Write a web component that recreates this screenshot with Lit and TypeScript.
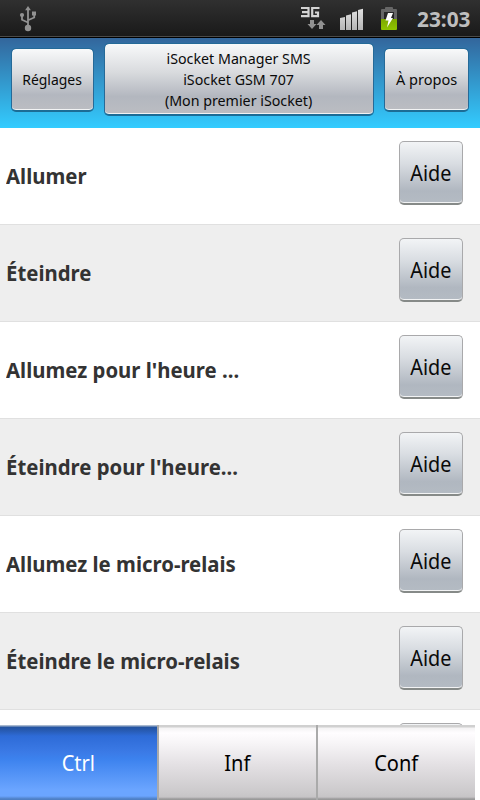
import { LitElement, html, css } from "lit";
import { customElement, property } from "lit/decorators.js";

@customElement("status-bar")
class StatusBar extends LitElement {
  static styles = css`
    :host {
      display: block;
      flex: none;
      height: 38px;
      box-sizing: border-box;
      background: linear-gradient(#303030, #191919);
      border-bottom: 1px solid #000;
      box-shadow: inset 0 -1px #4a4a48;
    }
    .icons { display: block; }
    .clock {
      font: bold 21px "Noto Sans", "Open Sans", sans-serif;
      fill: #bebebe;
    }
  `;
  render() {
    return html`
      <svg class="icons" width="480" height="37" viewBox="0 0 480 37">
        <defs>
          <linearGradient id="bars" x1="0" y1="0" x2="0" y2="1">
            <stop offset="0" stop-color="#e2e2e2" />
            <stop offset="1" stop-color="#b4b4b4" />
          </linearGradient>
          <linearGradient id="charge" x1="0" y1="0" x2="0" y2="1">
            <stop offset="0" stop-color="#7da800" />
            <stop offset="1" stop-color="#8fc400" />
          </linearGradient>
        </defs>
        <g fill="none" stroke="#929292" stroke-width="1.8">
          <path d="M28 27V9M28 22.5L22 19.7V15M28 20.3L34.2 17.5V14" />
        </g>
        <g fill="#929292">
          <circle cx="28" cy="28" r="3.2" />
          <circle cx="22" cy="15" r="2.1" />
          <path d="M28 6l2.900 4.200h-5.800zM32 11.500h4v4h-4z" />
        </g>
        <g fill="none" stroke="#d4d4d4" stroke-width="2.2">
          <path d="M301 8H308.500V16.200H301M302 12.200H308.500" />
          <path d="M319.500 8H312.200V16.200H318V12.500H315" />
        </g>
        <g fill="#919191">
          <path d="M310 20h4v4h2.500l-4.500 5-4.500-5h2.500z" />
          <path d="M319 29v-4h-2.500l4.500-5 4.500 5h-2.500v4z" />
        </g>
        <g fill="url(#bars)">
          <path d="M340 18l5-1v13h-5zM346 15.500l5-1.300V30h-5zM352 12.500l5-1.300V30h-5zM358 10l5-1.300V30h-5z" />
        </g>
        <path d="M385 9V8q0-1 1-1h6q1 0 1 1v1h3q1 0 1 1v9h-3v-7h-10v7h-3v-9q0-1 1-1z" fill="#666" />
        <path d="M381 19h16v10q0 1-1 1h-14q-1 0-1-1z" fill="url(#charge)" />
        <path d="M388 13h5l-2 5h2l-6 9.500 1.500-7h-3z" fill="#fff" />
        <text class="clock" x="417" y="27" textLength="53.500" lengthAdjust="spacingAndGlyphs">23:03</text>
      </svg>
    `;
  }
}

@customElement("metal-button")
class MetalButton extends LitElement {
  static styles = css`
    :host { display: block; box-sizing: border-box; }
    .face {
      display: flex;
      align-items: center;
      justify-content: center;
      width: 100%;
      height: 100%;
      box-sizing: border-box;
      padding: 0;
      border: 1px solid var(--edge, #256a98);
      border-bottom: 2px solid var(--base, #1c6c96);
      border-radius: 5px;
      background: var(--metal, linear-gradient(#f8f9fa, #d9dbde 40%, #b3b7bf 75%, #bbbdc2)) padding-box;
      box-shadow: inset 0 -1px #f2f3f4;
      color: #0a0a0a;
      font: 15px/21px "Noto Sans", "Open Sans", sans-serif;
      font-size: var(--size, 15px);
      text-align: center;
      white-space: nowrap;
    }
    .text { transform: scaleX(var(--condense, 0.95)); }
  `;
  render() {
    return html`<button class="face"><span class="text"><slot></slot></span></button>`;
  }
}

@customElement("command-row")
class CommandRow extends LitElement {
  static styles = css`
    :host {
      display: flex;
      flex: none;
      justify-content: space-between;
      align-items: flex-start;
      height: 97px;
      box-sizing: border-box;
      padding: 13px 17px 0 6px;
      border-bottom: 1px solid #e0e0e0;
      background: #fff;
    }
    :host(:nth-of-type(even)) { background: #eee; }
    .label {
      margin-top: 20px;
      font: bold 21px/30px "Noto Sans", "Open Sans", sans-serif;
      color: #333;
      white-space: pre;
      transform: scaleX(0.969);
      transform-origin: left;
    }
    metal-button {
      width: 64px;
      height: 64px;
      --edge: #a9a9ab;
      --base: #868a88;
      --metal: linear-gradient(#f2f4f6, #d9dde2 35%, #b0b7c0 80%, #b4bbc3);
      --size: 22px;
      --condense: 0.9;
    }
  `;
  @property() label = "";
  render() {
    return html`
      <span class="label">${this.label}</span>
      <metal-button>${this.label ? "Aide" : ""}</metal-button>
    `;
  }
}

@customElement("app-root")
class AppRoot extends LitElement {
  static styles = css`
    :host {
      display: flex;
      flex-direction: column;
      width: 480px;
      height: 800px;
      overflow: hidden;
      background: #fff;
    }
    .header {
      flex: none;
      display: flex;
      align-items: flex-start;
      gap: 10px;
      height: 90px;
      box-sizing: border-box;
      padding: 5px 11px 0;
      background: linear-gradient(#33669c, #33ccff);
    }
    .side { width: 83px; height: 64px; margin-top: 5px; --condense: 0.93; }
    .about { width: 85px; --condense: 0.97; }
    .title { width: 270px; height: 73px; }
    .list { flex: 1; min-height: 0; overflow: hidden; display: flex; flex-direction: column; }
    .tabs {
      flex: none;
      display: grid;
      grid-template-columns: 157px 157px 157px;
      gap: 2px;
      width: 475px;
      height: 75px;
      background: #aaa;
    }
    .tab {
      display: flex;
      align-items: center;
      justify-content: center;
      padding-bottom: 2px;
      box-sizing: border-box;
      font: 22px/30px "Noto Sans", "Open Sans", sans-serif;
      color: #000;
      background: linear-gradient(#d0d0d0 0 2px, #f4f3f4 3px, #fffdff 8px, #f7f5f7 18px, #e5e2e5 38px, #cbc9cb 68px, #c6c4c6 72px, #999 74px);
    }
    .active {
      color: #fff;
      background: linear-gradient(#a7b8cf 0 1px, #23539f 2px, #285cb5 6px, #2e6bd7 11px, #3b7ae6 27px, #3c82ee 34px, #6ba5ff 65px, #6ba5ff 71px, #4e7fc4 74px);
    }
    .name { transform: scaleX(0.91); }
  `;
  rows = [
    "Allumer",
    "Éteindre",
    "Allumez pour l'heure ...",
    "Éteindre pour l'heure...",
    "Allumez le micro-relais",
    "Éteindre le micro-relais",
    "",
  ];
  render() {
    return html`
      <status-bar></status-bar>
      <div class="header">
        <metal-button class="side">Réglages</metal-button>
        <metal-button class="title">iSocket Manager SMS<br />iSocket GSM 707<br />(Mon premier iSocket)</metal-button>
        <metal-button class="side about">À propos</metal-button>
      </div>
      <div class="list">${this.rows.map((r) => html`<command-row .label=${r}></command-row>`)}</div>
      <div class="tabs">
        <div class="tab active"><span class="name">Ctrl</span></div>
        <div class="tab"><span class="name">Inf</span></div>
        <div class="tab"><span class="name">Conf</span></div>
      </div>
    `;
  }
}
